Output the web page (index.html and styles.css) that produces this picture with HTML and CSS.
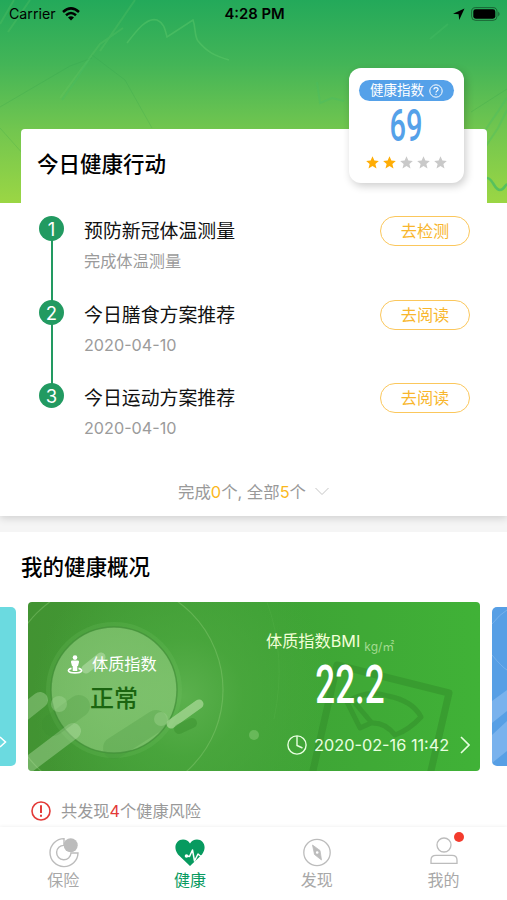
FILE: index.html
```html
<!DOCTYPE html>
<html lang="zh-CN">
  <head>
    <meta charset="UTF-8" />
    <meta name="viewport" content="width=device-width, initial-scale=1.0" />
    <title>健康</title>
    <link rel="stylesheet" href="styles.css">
  </head>

  <body>
    <div class="app">
      <div class="hero">
        <svg class="hero-bg" viewBox="0 0 507 203" fill="none">
          <path d="M0 24L14 0M8 32L30 0M100 51L135 0M60 98L100 44L123 28" stroke="#6fcf6b" stroke-width="2" opacity=".22" />
          <path d="M127 43C137 30 147 17 157 20C164 23 165 29 167 37L193 20C196 28 194 35 198 41C207 52 215 56 229 60" stroke="#5fc96a" stroke-width="1.6" opacity=".45" />
          <path d="M0 107L70 66L92 58M0 128L24 155M92 55L125 80L152 128M507 89L471 112" stroke="#2d9d4d" stroke-width="1" opacity=".2" />
          <path d="M62 100L76 80L90 58M317 82L320 103L332 98L344 101M430 39L448 24M484 132L507 98M482 152L498 128L507 110" stroke="#48bd63" stroke-width="2" opacity=".35" />
          <path d="M487 178C493 178 494 190 500 190C504 190 505 185 507 184" stroke="#48bd63" stroke-width="2.5" opacity=".8" />
        </svg>
        <div class="status">
          <div class="status-left">
            <span>Carrier</span>
            <svg width="18" height="14" viewBox="0 0 18 14" fill="none" stroke="#000" stroke-width="2.5">
              <path d="M1 5Q9 -2.2 17 5M4 8.3Q9 3.8 14 8.3" />
              <path d="M6 10.4Q9 7.9 12 10.4L9 13.5Z" fill="#000" stroke="none" />
            </svg>
          </div>
          <div class="status-time">4:28 PM</div>
          <div class="status-right">
            <svg width="12" height="12" viewBox="0 0 12 12"><path d="M11.5 .5L0 5.8L5.6 6.3L6.2 12Z" /></svg>
            <svg width="29" height="14" viewBox="0 0 29 14">
              <rect x=".6" y=".6" width="25.4" height="12.8" rx="4" fill="none" stroke="#000" stroke-opacity=".4" />
              <rect x="2.3" y="2.3" width="22" height="9.4" rx="2.4" />
              <path d="M27.2 4.5Q30 7 27.2 9.5Z" fill-opacity=".4" />
            </svg>
          </div>
        </div>
        <div class="score">
          <div class="score-label">
            <span>健康指数</span>
            <svg width="14" height="14" viewBox="0 0 14 14" fill="none" stroke="#fff">
              <circle cx="7" cy="7" r="6.2" />
              <path d="M4.9 5.5C5 2.9 9.2 3 9.1 5.4C9 6.9 7 6.9 7 8.6M7 9.8V11" stroke-width="1.1" />
            </svg>
          </div>
          <div class="score-num">69</div>
          <div class="stars">
            <svg class="on" viewBox="0 0 14 14"><path d="M7 .3L9 4.9L13.8 5.3L10.1 8.5L11.3 13.4L7 10.8L2.7 13.4L3.9 8.5L.2 5.3L5 4.9Z" /></svg>
            <svg class="on" viewBox="0 0 14 14"><path d="M7 .3L9 4.9L13.8 5.3L10.1 8.5L11.3 13.4L7 10.8L2.7 13.4L3.9 8.5L.2 5.3L5 4.9Z" /></svg>
            <svg viewBox="0 0 14 14"><path d="M7 .3L9 4.9L13.8 5.3L10.1 8.5L11.3 13.4L7 10.8L2.7 13.4L3.9 8.5L.2 5.3L5 4.9Z" /></svg>
            <svg viewBox="0 0 14 14"><path d="M7 .3L9 4.9L13.8 5.3L10.1 8.5L11.3 13.4L7 10.8L2.7 13.4L3.9 8.5L.2 5.3L5 4.9Z" /></svg>
            <svg viewBox="0 0 14 14"><path d="M7 .3L9 4.9L13.8 5.3L10.1 8.5L11.3 13.4L7 10.8L2.7 13.4L3.9 8.5L.2 5.3L5 4.9Z" /></svg>
          </div>
        </div>
        <div class="panel-top">
          <h2>今日健康行动</h2>
        </div>
      </div>

      <div class="actions">
        <ul>
          <li>
            <i class="num">1</i>
            <div class="info">
              <p class="name">预防新冠体温测量</p>
              <p class="desc">完成体温测量</p>
            </div>
            <button>去检测</button>
          </li>
          <li>
            <i class="num">2</i>
            <div class="info">
              <p class="name">今日膳食方案推荐</p>
              <p class="desc">2020-04-10</p>
            </div>
            <button>去阅读</button>
          </li>
          <li>
            <i class="num">3</i>
            <div class="info">
              <p class="name">今日运动方案推荐</p>
              <p class="desc">2020-04-10</p>
            </div>
            <button>去阅读</button>
          </li>
        </ul>
        <div class="more">
          <span>完成<b>0</b>个, 全部<b>5</b>个</span>
          <svg width="14" height="9" viewBox="0 0 14 9" fill="none" stroke="#c4c4c4"><path d="M.5 1L7 7.5L13.5 1" /></svg>
        </div>
      </div>

      <div class="overview">
        <h2>我的健康概况</h2>
        <div class="slides">
          <div class="side side-left">
            <svg width="7" height="12" viewBox="0 0 7 12" fill="none" stroke="#fff" stroke-width="1.5"><path d="M0 1L5.5 6L0 11" /></svg>
          </div>
          <div class="bmi">
            <svg class="bmi-bg" viewBox="0 0 452 169" fill="none">
              <defs>
                <radialGradient id="disc" cx=".5" cy=".5" r=".55">
                  <stop offset="0" stop-color="#8cc87a" stop-opacity=".75" />
                  <stop offset="1" stop-color="#8ac878" stop-opacity=".65" />
                </radialGradient>
              </defs>
              <circle cx="86" cy="88" r="109" stroke="#8fce78" stroke-opacity=".4" stroke-width="1.2" />
              <circle cx="86" cy="88" r="68" fill="#7bc569" fill-opacity=".18" />
              <circle cx="86" cy="88" r="63" fill="url(#disc)" stroke="#3f8c35" stroke-opacity=".65" stroke-width="1.5" />
              <g stroke-linecap="round">
                <path d="M58 67L73 55" stroke="#d2edc8" stroke-opacity=".4" stroke-width="9" />
                <path d="M-12 117L12 98" stroke="#b0dd9f" stroke-opacity=".4" stroke-width="16" />
                <path d="M-4 166L45 129" stroke="#b9e2aa" stroke-opacity=".4" stroke-width="16" />
                <path d="M25 123L51 104" stroke="#3e8b32" stroke-opacity=".2" stroke-width="22" />
                <path d="M86 146L128 119" stroke="#45933a" stroke-opacity=".25" stroke-width="22" />
                <path d="M143 122L171 102" stroke="#b3dfa2" stroke-opacity=".65" stroke-width="9" />
                <path d="M151 127L164 121" stroke="#318826" stroke-opacity=".35" stroke-width="10" />
              </g>
              <circle cx="31" cy="102" r="8" fill="#a6d897" fill-opacity=".4" />
              <circle cx="133" cy="117" r="7" fill="#98cf88" fill-opacity=".5" />
              <circle cx="226" cy="133" r="5" fill="#a8e095" fill-opacity=".35" />
              <path d="M239 0Q259 55 246 117" stroke="#7fce68" stroke-opacity=".12" />
              <g stroke="#328c29" stroke-opacity=".5" stroke-width="7" stroke-linejoin="round">
                <path d="M284 173L309 63L421 91L402 173" />
                <path d="M319 100Q339 87 360 94Q385 99 393 115Q381 128 367 133Q357 120 343 121L332 126ZM327 101L343 120" stroke-width="5" />
              </g>
            </svg>
            <div class="bmi-state">
              <p class="state-label">
                <svg width="16" height="19" viewBox="0 0 16 19" fill="#fff">
                  <circle cx="8" cy="2.6" r="2.3" />
                  <path d="M5 5.4H11Q12.3 5.5 12 7.3L11 11H10.3V16H5.7V11H5L4 7.3Q3.7 5.5 5 5.4Z" />
                  <path d="M4.5 13.4C-.5 14.5 .5 17.8 8 17.9C15.5 17.8 16.5 14.5 11.5 13.4" fill="none" stroke="#fff" stroke-width="1.6" />
                </svg>
                <span>体质指数</span>
              </p>
              <p class="state-value">正常</p>
            </div>
            <div class="bmi-data">
              <p class="bmi-title">体质指数BMI<small>kg/㎡</small></p>
              <p class="bmi-num">22.2</p>
              <p class="bmi-time">
                <svg width="20" height="20" viewBox="0 0 20 20" fill="none" stroke="#e8ffe0" stroke-width="1.4"><circle cx="10" cy="10" r="9.1" /><path d="M10 1V10.5L15.5 13" /></svg>
                <span>2020-02-16 11:42</span>
                <svg class="arrow" width="10" height="18" viewBox="0 0 10 18" fill="none" stroke="#e8ffe0" stroke-width="1.6"><path d="M1 1L9 9L1 17" /></svg>
              </p>
            </div>
          </div>
          <div class="side side-right">
            <svg width="15" height="159" viewBox="0 0 15 159" fill="none">
              <path d="M0 17Q8 7 15 3M0 48Q10 60 15 63" stroke="#8bbdf0" stroke-opacity=".6" />
              <path d="M0 94L15 83V104L0 116Z" fill="#8fc0f2" fill-opacity=".6" />
              <path d="M0 128L15 114V144L0 156Z" fill="#8fc0f2" fill-opacity=".6" />
            </svg>
          </div>
        </div>
        <div class="risk">
          <svg width="20" height="20" viewBox="0 0 20 20" fill="none" stroke="#e33a38"><circle cx="10" cy="10" r="9" stroke-width="1.6" /><path d="M10 4.3V12M10 13.7V15.8" stroke-width="2" /></svg>
          <span>共发现<b>4</b>个健康风险</span>
        </div>
      </div>

      <div class="tabbar">
        <div class="tab">
          <svg width="32" height="32" viewBox="0 0 32 32" fill="none" stroke="#bcbcbc" stroke-width="1.4">
            <path d="M17 2.6A14 14 0 1 0 31 17H24A7.2 7.2 0 1 1 17 9.4Z" />
            <circle cx="23.7" cy="9.3" r="7" fill="#bcbcbc" stroke="none" />
          </svg>
          <span>保险</span>
        </div>
        <div class="tab active">
          <svg width="32" height="32" viewBox="0 0 32 32" fill="none">
            <path d="M16 30L4 18.5C-1.5 11 2.5 3.5 9 3.5C12 3.5 14.5 5 16 7.5C17.5 5 20 3.5 23 3.5C29.5 3.5 33.5 11 28 18.5Z" fill="#079a5f" />
            <circle cx="12.5" cy="20" r="1.8" fill="#fff" />
            <path d="M12.5 20L15.5 20.5L18.5 14L20.5 25L24 18L27 20.5L31.5 19.5" stroke="#fff" stroke-width="1.5" stroke-linejoin="round" />
          </svg>
          <span>健康</span>
        </div>
        <div class="tab">
          <svg width="32" height="32" viewBox="0 0 32 32" fill="none" stroke="#bcbcbc" stroke-width="1.3">
            <circle cx="16" cy="16.5" r="13.2" />
            <path d="M11.5 9L19 14.5L20.5 24L13.5 18.5Z" fill="#bcbcbc" stroke-width=".8" />
            <circle cx="16.2" cy="16.5" r="2" fill="#fff" />
          </svg>
          <span>发现</span>
        </div>
        <div class="tab">
          <svg width="32" height="32" viewBox="0 0 32 32" fill="none" stroke="#bcbcbc" stroke-width="1.3">
            <circle cx="16" cy="9" r="7" />
            <path d="M3 27.3V24Q3 19.3 8 19.3H24Q29 19.3 29 24V27.3Z" />
          </svg>
          <span>我的</span>
          <i class="dot"></i>
        </div>
      </div>
    </div>
  </body>
</html>
```
FILE: styles.css
```css
* {
  margin: 0;
  padding: 0;
  list-style: none;
  box-sizing: border-box;
}

body {
  font-family: Inter, "Noto Sans CJK SC", sans-serif;
  color: #111;
  background: #fff;
}

i, b {
  font-style: normal;
  font-weight: 400;
}

svg {
  display: block;
  flex: none;
}

h2 {
  font-size: 21.5px;
  font-weight: 500;
  line-height: 30px;
  color: #000;
}

.app {
  width: 507px;
  height: 900px;
  display: flex;
  flex-direction: column;
  overflow: hidden;
  background: #f5f5f5;
}

/* 顶部 */
.hero {
  position: relative;
  z-index: 1;
  height: 203px;
  flex: none;
  display: flex;
  flex-direction: column;
  justify-content: space-between;
  background: linear-gradient(#23a95a, #44b557 32%, #72c64f 64%, #9bd644);
}

.hero-bg {
  position: absolute;
  left: 0;
  top: 0;
  width: 507px;
  height: 203px;
}

.status {
  position: relative;
  height: 27px;
  padding: 0 7px 0 9px;
  display: grid;
  grid-template-columns: 1fr auto 1fr;
  align-items: center;
  font-size: 14.2px;
  color: #000;
}

.status-left,
.status-right {
  display: flex;
  align-items: center;
  gap: 6px;
}

.status-right {
  justify-content: flex-end;
}

.status-time {
  font-weight: 600;
  font-size: 14.8px;
}

.panel-top {
  position: relative;
  height: 74px;
  margin: 0 20px 0 21px;
  padding: 20px 16px 0;
  border-radius: 4px 4px 0 0;
  background: #fff;
}

/* 健康指数浮层 */
.score {
  position: absolute;
  z-index: 2;
  left: 349px;
  top: 68px;
  width: 115px;
  height: 115px;
  padding-top: 12px;
  border-radius: 12px;
  display: flex;
  flex-direction: column;
  align-items: center;
  background: #fff;
  box-shadow: 2px 3px 8px rgba(0, 0, 0, .2);
}

.score-label {
  width: 95px;
  height: 21px;
  border-radius: 11px;
  display: flex;
  align-items: center;
  justify-content: center;
  gap: 5px;
  font-size: 13.5px;
  line-height: 23px;
  color: #fff;
  background: #55a1e9;
}

.score-num {
  height: 50px;
  font: 500 44px/51px Roboto, sans-serif;
  color: #55a1e9;
  transform: scaleX(.66);
}

.stars {
  display: flex;
  gap: 4px;
  padding-top: 5px;
}

.stars svg {
  width: 13px;
  height: 13px;
  fill: #c9c9c9;
}

.stars .on {
  fill: #ffad05;
}

/* 行动列表 */
.actions {
  flex: none;
  height: 313px;
  background: #fff;
  box-shadow: 0 2px 8px rgba(0, 0, 0, .16);
}

.actions ul {
  padding: 13px 37px 0 39px;
}

.actions li {
  position: relative;
  display: flex;
  align-items: flex-start;
  height: 83.6px;
}

.actions li:not(:last-child)::before {
  content: "";
  position: absolute;
  left: 11.5px;
  top: 13px;
  width: 2px;
  height: 84px;
  background: #229a61;
}

.num {
  position: relative;
  z-index: 1;
  width: 25px;
  height: 25px;
  border-radius: 50%;
  text-align: center;
  font-size: 18.5px;
  line-height: 26px;
  color: #fff;
  background: #229a61;
}

.info {
  flex: 1;
  padding: 1px 0 0 20px;
}

.name {
  font-size: 18.9px;
  line-height: 29px;
}

.desc {
  margin-top: 3px;
  font-size: 16.2px;
  line-height: 24px;
  color: #9b9b9b;
}

.actions button {
  width: 90px;
  height: 30px;
  border: 1px solid #fbc75c;
  border-radius: 15px;
  font-family: inherit;
  font-size: 16.2px;
  line-height: 29px;
  color: #f8b62d;
  background: #fff;
}

.more {
  display: flex;
  justify-content: center;
  align-items: center;
  gap: 9px;
  margin-top: 12px;
  font-size: 16.4px;
  line-height: 26px;
  color: #999;
}

.more b {
  color: #fbb81c;
}

/* 健康概况 */
.overview {
  flex: 1;
  margin-top: 16px;
  background: #fff;
}

.overview h2 {
  padding: 20px 21px 0;
}

.slides {
  display: flex;
  align-items: center;
  gap: 12px;
  margin-top: 20px;
}

.side {
  height: 159px;
  flex: none;
  overflow: hidden;
}

.side-left {
  width: 16px;
  display: flex;
  align-items: flex-end;
  padding-bottom: 18px;
  border-radius: 0 5px 5px 0;
  background: #6bdae0;
}

.side-right {
  width: 15px;
  border-radius: 5px 0 0 5px;
  background: #579fe5;
}

.bmi {
  position: relative;
  width: 452px;
  height: 169px;
  border-radius: 4px;
  overflow: hidden;
  display: flex;
  background: radial-gradient(circle at 155px 95px, #5bb04d 0, rgba(76, 168, 63, .7) 60px, rgba(63, 172, 52, 0) 150px), linear-gradient(90deg, #429332, #3ea135 50%, #40b237);
}

.bmi-bg {
  position: absolute;
  left: 0;
  top: 0;
  width: 452px;
  height: 169px;
}

.bmi-state {
  position: relative;
  width: 238px;
  padding: 49px 0 0 39px;
}

.state-label {
  display: flex;
  align-items: center;
  gap: 9px;
  font-size: 16.2px;
  line-height: 26px;
  color: #fff;
}

.state-value {
  padding-left: 23px;
  font-size: 24px;
  font-weight: 500;
  line-height: 43px;
  color: #1b6510;
}

.bmi-data {
  position: relative;
  flex: 1;
  padding-top: 26px;
}

.bmi-title {
  font-size: 16.2px;
  line-height: 26px;
  color: #f3ffd8;
}

.bmi-title small {
  position: relative;
  top: 4px;
  margin-left: 4px;
  font-size: 12px;
  color: #a3db91;
}

.bmi-num {
  width: 168px;
  height: 65px;
  text-align: center;
  font: 500 53px/59px Roboto, sans-serif;
  color: #fff;
  transform: scaleX(.66);
}

.bmi-time {
  display: flex;
  align-items: center;
  margin-top: 12px;
  padding-left: 21px;
  font-size: 16.3px;
  line-height: 24px;
  color: #e8ffe0;
}

.bmi-time span {
  margin-left: 7px;
}

.bmi-time .arrow {
  margin-left: 11px;
}

.risk {
  display: flex;
  align-items: center;
  gap: 10px;
  padding: 27px 0 0 31px;
  font-size: 16.2px;
  line-height: 26px;
  color: #999;
}

.risk b {
  color: #e33a38;
}

/* 底部导航 */
.tabbar {
  position: relative;
  flex: none;
  height: 73px;
  display: flex;
  background: #fff;
  box-shadow: 0 -1px 3px rgba(0, 0, 0, .05);
}

.tab {
  position: relative;
  flex: 1;
  display: flex;
  flex-direction: column;
  align-items: center;
  padding-top: 9px;
  font-size: 16px;
  line-height: 25px;
  color: #a8a8a8;
}

.active {
  color: #079a5f;
}

.dot {
  position: absolute;
  left: 74px;
  top: 5px;
  width: 10px;
  height: 10px;
  border-radius: 50%;
  background: #f33b2d;
}
```
